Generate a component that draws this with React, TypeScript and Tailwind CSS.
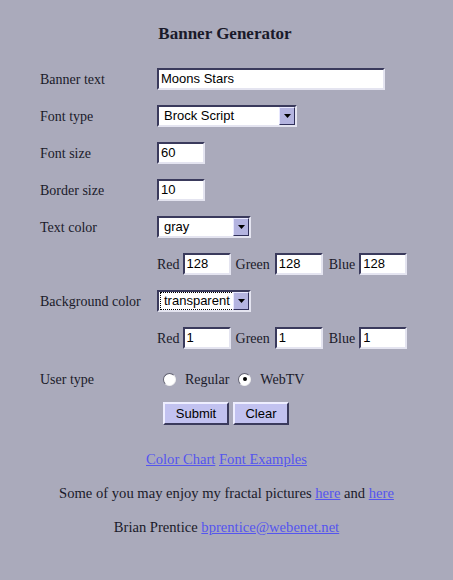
import React from "react";

const serif = { fontFamily: '"Liberation Serif", "Times New Roman", serif' };

function TextBox({ value, w }: { value: string; w: string }) {
  return (
    <div
      className={`${w} h-[22px] bg-white border-2 border-t-[#3a3a5c] border-l-[#3a3a5c] border-b-[#e4e4f0] border-r-[#e4e4f0] flex items-center pl-[2px] text-[13px] text-black font-['Liberation_Sans',Arial,sans-serif]`}
    >
      {value}
    </div>
  );
}

function Select({ value, w, focused }: { value: string; w: string; focused?: boolean }) {
  return (
    <div
      className={`${w} h-[22px] bg-white border-2 border-t-[#3a3a5c] border-l-[#3a3a5c] border-b-[#e4e4f0] border-r-[#e4e4f0] flex items-center text-[13px] text-black font-['Liberation_Sans',Arial,sans-serif]`}
    >
      <span className={`flex-1 ml-[2px] pl-[3px] leading-[16px] ${focused ? "outline outline-1 outline-dotted outline-black" : ""}`}>
        {value}
      </span>
      <div className="w-[16px] h-[18px] bg-[#b4b4e0] border border-t-[#e8e8ff] border-l-[#e8e8ff] border-b-[#30305a] border-r-[#30305a] flex items-center justify-center">
        <svg width="7" height="4" viewBox="0 0 7 4">
          <path d="M0 0h7L3.5 4z" fill="#000" />
        </svg>
      </div>
    </div>
  );
}

function Radio({ checked }: { checked?: boolean }) {
  return (
    <div className="w-[13px] h-[13px] rounded-full bg-white border border-t-[#606070] border-l-[#606070] border-b-[#f0f0f0] border-r-[#f0f0f0] flex items-center justify-center">
      {checked && <div className="w-[4px] h-[4px] rounded-full bg-black" />}
    </div>
  );
}

function Btn({ label, w }: { label: string; w: string }) {
  return (
    <div
      className={`${w} h-[23px] bg-[#c2c2f0] border-2 border-t-[#eeeeff] border-l-[#eeeeff] border-b-[#3a3a5c] border-r-[#3a3a5c] flex items-center justify-center text-[13px] text-black font-['Liberation_Sans',Arial,sans-serif]`}
    >
      {label}
    </div>
  );
}

function Row({ label, children }: { label?: string; children: React.ReactNode }) {
  return (
    <div className="flex items-center h-[37px]">
      <div className="w-[117px] text-[14px] text-[#1a1a2a]">{label}</div>
      <div className="flex items-center">{children}</div>
    </div>
  );
}

function Rgb({ r, g, b }: { r: string; g: string; b: string }) {
  return (
    <div className="flex items-center text-[14px] text-[#1a1a2a]">
      <span className="mr-[3px]">Red</span>
      <TextBox value={r} w="w-[48px]" />
      <span className="ml-[5px] mr-[5px]">Green</span>
      <TextBox value={g} w="w-[48px]" />
      <span className="ml-[6px] mr-[4px]">Blue</span>
      <TextBox value={b} w="w-[48px]" />
    </div>
  );
}

export default function App() {
  return (
    <div className="w-[453px] h-[580px] bg-[#aaaabb] overflow-hidden" style={serif}>
      <h1 className="text-center text-[17px] font-bold text-[#1a1a2a] pt-[21px] pb-[14px] pr-[3px]">Banner Generator</h1>
      <div className="pl-[40px]">
        <Row label="Banner text">
          <TextBox value="Moons Stars" w="w-[228px]" />
        </Row>
        <Row label="Font type">
          <Select value="Brock Script" w="w-[140px]" />
        </Row>
        <Row label="Font size">
          <TextBox value="60" w="w-[48px]" />
        </Row>
        <Row label="Border size">
          <TextBox value="10" w="w-[48px]" />
        </Row>
        <Row label="Text color">
          <Select value="gray" w="w-[94px]" />
        </Row>
        <Row>
          <Rgb r="128" g="128" b="128" />
        </Row>
        <Row label="Background color">
          <Select value="transparent" w="w-[94px]" focused />
        </Row>
        <Row>
          <Rgb r="1" g="1" b="1" />
        </Row>
        <div className="flex items-center h-[42px] pt-[3px]">
          <div className="w-[117px] text-[14px] text-[#1a1a2a]">User type</div>
          <div className="flex items-center text-[14px] text-[#1a1a2a] pl-[6px]">
            <Radio />
            <span className="ml-[9px] mr-[9px]">Regular</span>
            <Radio checked />
            <span className="ml-[9px]">WebTV</span>
          </div>
        </div>
        <div className="flex h-[30px] items-center pl-[123px] gap-[4px]">
          <Btn label="Submit" w="w-[66px]" />
          <Btn label="Clear" w="w-[56px]" />
        </div>
      </div>
      <div className="text-center text-[14.6px] leading-[20px] text-[#1a1a2a] mt-[20px] flex flex-col gap-[14px]">
        <p>
          <a className="text-[#5555ee] underline">Color Chart</a>{" "}
          <a className="text-[#5555ee] underline">Font Examples</a>
        </p>
        <p>
          Some of you may enjoy my fractal pictures <a className="text-[#5555ee] underline">here</a> and{" "}
          <a className="text-[#5555ee] underline">here</a>
        </p>
        <p>
          Brian Prentice <a className="text-[#5555ee] underline">bprentice@webenet.net</a>
        </p>
      </div>
    </div>
  );
}
